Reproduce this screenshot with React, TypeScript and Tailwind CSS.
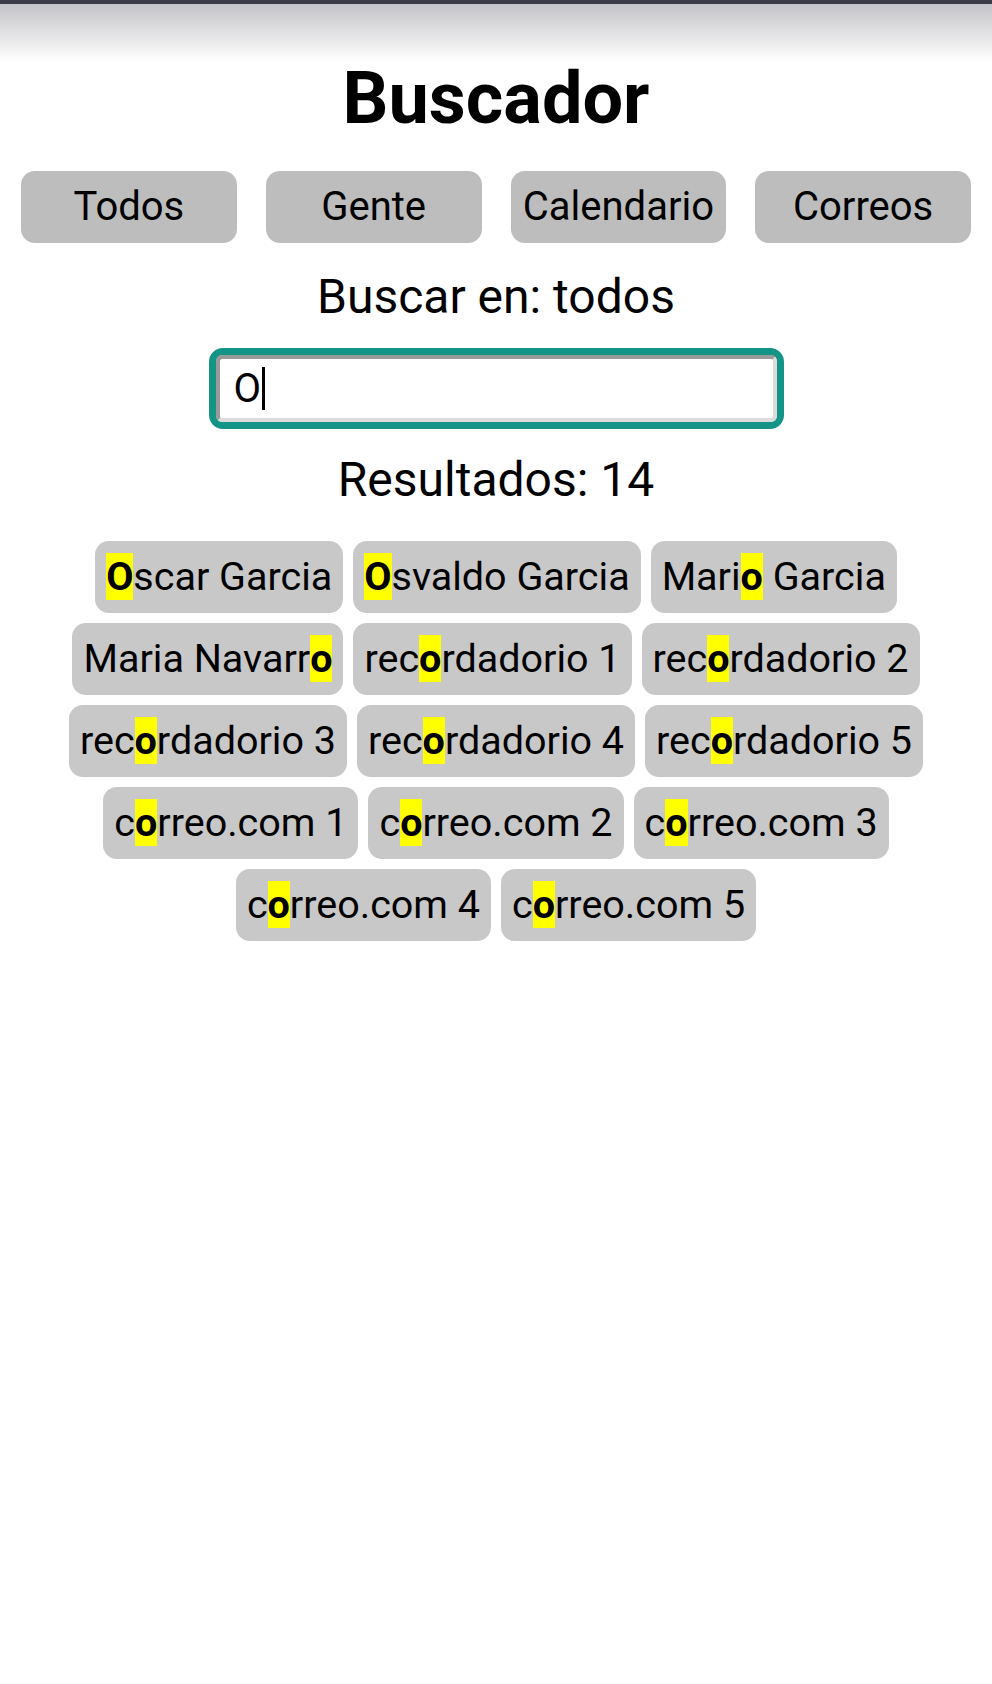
import React, { useState } from "react";

type Categoria = "todos" | "gente" | "calendario" | "correos";

interface Item {
  id: number;
  texto: string;
  tipo: Categoria;
}

const datos: Item[] = [
  { id: 1, texto: "Oscar Garcia", tipo: "gente" },
  { id: 2, texto: "Osvaldo Garcia", tipo: "gente" },
  { id: 3, texto: "Mario Garcia", tipo: "gente" },
  { id: 4, texto: "Maria Navarro", tipo: "gente" },
  { id: 5, texto: "recordadorio 1", tipo: "calendario" },
  { id: 6, texto: "recordadorio 2", tipo: "calendario" },
  { id: 7, texto: "recordadorio 3", tipo: "calendario" },
  { id: 8, texto: "recordadorio 4", tipo: "calendario" },
  { id: 9, texto: "recordadorio 5", tipo: "calendario" },
  { id: 10, texto: "correo.com 1", tipo: "correos" },
  { id: 11, texto: "correo.com 2", tipo: "correos" },
  { id: 12, texto: "correo.com 3", tipo: "correos" },
  { id: 13, texto: "correo.com 4", tipo: "correos" },
  { id: 14, texto: "correo.com 5", tipo: "correos" },
];

const botones: { label: string; valor: Categoria }[] = [
  { label: "Todos", valor: "todos" },
  { label: "Gente", valor: "gente" },
  { label: "Calendario", valor: "calendario" },
  { label: "Correos", valor: "correos" },
];

// resalta la primera coincidencia del texto buscado
const Resaltado: React.FC<{ texto: string; busqueda: string }> = ({ texto, busqueda }) => {
  const i = texto.toLowerCase().indexOf(busqueda.toLowerCase());
  if (!busqueda || i < 0) return <>{texto}</>;
  return (
    <>
      {texto.slice(0, i)}
      <span className="bg-[#ffff00] font-bold">{texto.slice(i, i + busqueda.length)}</span>
      {texto.slice(i + busqueda.length)}
    </>
  );
};

export default function App() {
  const [categoria, setCategoria] = useState<Categoria>("todos");
  const [busqueda] = useState("O");

  const resultados = datos.filter(
    (d) =>
      (categoria === "todos" || d.tipo === categoria) &&
      d.texto.toLowerCase().includes(busqueda.toLowerCase())
  );

  return (
    <div className="relative min-h-[1684px] bg-white font-['Roboto',sans-serif] text-black">
      {/* sombra de la barra superior */}
      <div className="pointer-events-none absolute inset-x-0 top-0 h-[62px] border-t-[4px] border-[#3c3c46] bg-linear-to-b from-[#c4c4c8] to-white/0" />

      <h1 className="pt-[57px] text-center text-[72px] font-bold leading-[84px]">Buscador</h1>

      <div className="mt-[30px] flex gap-[29px] px-[21px]">
        {botones.map((b) => (
          <button
            key={b.valor}
            onClick={() => setCategoria(b.valor)}
            className="flex h-[72px] flex-1 items-center justify-center rounded-[14px] bg-[#bdbdbd] text-[40px]"
          >
            {b.label}
          </button>
        ))}
      </div>

      <p className="mt-[26px] text-center text-[48px] leading-[56px]">Buscar en: {categoria}</p>

      <div className="mx-auto mt-[23px] h-[81px] w-[575px] rounded-[14px] border-[7px] border-[#139486]">
        <div className="flex h-full items-center rounded-[6px] border-[4px] border-b-[#dcdcdc] border-l-[#9a9a9a] border-r-[#dcdcdc] border-t-[#9a9a9a] bg-white pl-[14px] text-[40px]">
          <span>{busqueda}</span>
          <span className="ml-[1px] h-[43px] w-[3px] bg-black" />
        </div>
      </div>

      <p className="mt-[23px] text-center text-[48px] leading-[56px]">Resultados: {resultados.length}</p>

      <div className="mt-[33px] flex flex-wrap justify-center gap-[10px] px-[20px]">
        {resultados.map((r) => (
          <div
            key={r.id}
            className="flex h-[72px] items-center rounded-[14px] bg-[#c8c8c8] px-[11px] text-[39.5px]"
          >
            <span>
              <Resaltado texto={r.texto} busqueda={busqueda} />
            </span>
          </div>
        ))}
      </div>
    </div>
  );
}
